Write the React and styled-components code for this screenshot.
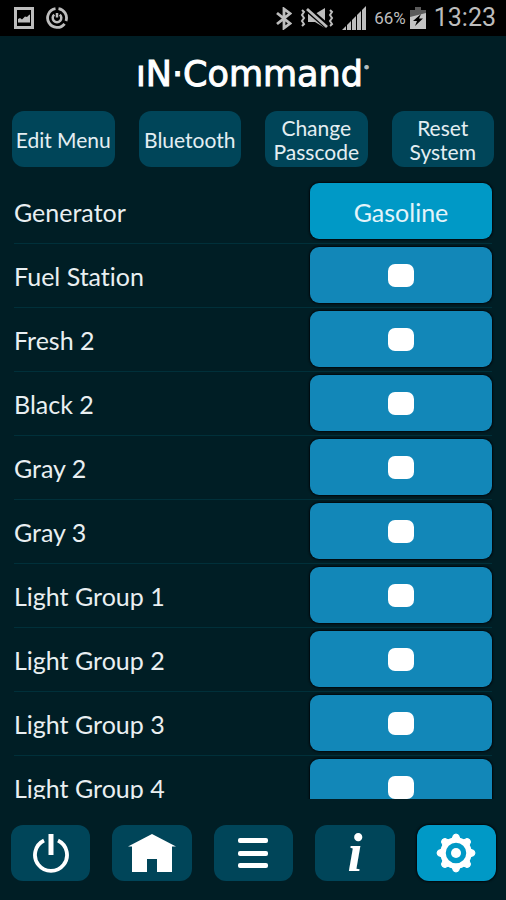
import { useState } from "react";
import styled, { createGlobalStyle } from "styled-components";

const actions = ["Edit Menu", "Bluetooth", "Change Passcode", "Reset System"];

const options = [
  { id: "fuel-station", name: "Fuel Station" },
  { id: "fresh-2", name: "Fresh 2" },
  { id: "black-2", name: "Black 2" },
  { id: "gray-2", name: "Gray 2" },
  { id: "gray-3", name: "Gray 3" },
  { id: "light-group-1", name: "Light Group 1" },
  { id: "light-group-2", name: "Light Group 2" },
  { id: "light-group-3", name: "Light Group 3" },
  { id: "light-group-4", name: "Light Group 4" },
];

const GlobalStyle = createGlobalStyle`
  *,
  *::before,
  *::after {
    box-sizing: border-box;
  }
  body {
    margin: 0;
    background: #001e25;
    color: #e9eff1;
    font-family: Lato, "Open Sans", sans-serif;
    font-variant-ligatures: none;
  }
  button {
    font-family: inherit;
    border: none;
    padding: 0;
    cursor: pointer;
  }
`;

/* status bar icons */
const PictureIcon = () => (
  <svg width="20" height="22" viewBox="0 0 20 22" aria-hidden="true">
    <rect x="1.5" y="1.5" width="17" height="19" fill="none" stroke="#bdbdbd" strokeWidth="3" />
    <path d="M4 15.500V12l2-1 2 1.500 3-3 2 .5 2-2 1-.5v8z" fill="#bdbdbd" />
  </svg>
);

const TargetIcon = () => (
  <svg width="22" height="22" viewBox="0 0 22 22" fill="none" stroke="#bdbdbd" aria-hidden="true">
    <path d="M12.500 1.600A9.500 9.500 0 0 1 20 14" strokeWidth="2.800" />
    <path d="M18.600 16.800A9.500 9.500 0 1 1 9.500 1.600" strokeWidth="2.800" />
    <path d="M8.200 7.600a4.300 4.300 0 1 0 5.600 0" strokeWidth="2.500" />
    <path d="M11 6v4.500" strokeWidth="2.500" />
  </svg>
);

const BluetoothIcon = () => (
  <svg width="16" height="23" viewBox="0 0 16 23" fill="none" stroke="#bdbdbd" strokeWidth="2.800" aria-hidden="true">
    <path d="M1 6l13 10.500-6 4.500V2l6 4.500L1 17" />
  </svg>
);

const MutedIcon = () => (
  <svg width="34" height="22" viewBox="0 0 34 22" aria-hidden="true">
    <g fill="none" stroke="#bdbdbd" strokeWidth="2">
      <path d="M2 3l2 2-2 3 2 3-2 3 2 3-2 2" />
      <path d="M30 3l2 2-2 3 2 3-2 3 2 3-2 2" />
    </g>
    <path d="M8 7h7l10-6v20l-10-6H8z" fill="#bdbdbd" />
    <path d="M6 1l22 19" stroke="#000" strokeWidth="6" />
    <path d="M7 2l20 18" stroke="#bdbdbd" strokeWidth="2.800" />
  </svg>
);

const SignalIcon = () => (
  <svg width="24" height="24" viewBox="0 0 24 24" fill="#bdbdbd" aria-hidden="true">
    <path d="M0 24l4-4v4zM5 24v-5l4-4V24zM10 24V14l4-4V24zM15 24V9L19 5v19zM20 24V4L24 0v24z" />
  </svg>
);

const BatteryIcon = () => (
  <svg width="16" height="22" viewBox="0 0 16 22" aria-hidden="true">
    <path d="M5 0h6v3h5v8H0V3h5z" fill="#5b5b5b" />
    <path d="M0 10l16-4v16H0z" fill="#c4c4c4" />
    <path d="M11 7L3 14h4L5 19l8-7.500H9z" fill="#000" />
  </svg>
);

/* bottom bar icons */
const PowerIcon = () => (
  <svg width="36" height="40" viewBox="0 0 36 40" fill="none" stroke="#fff" aria-hidden="true">
    <path d="M11 7.500A16 16 0 1 0 25 7.500" strokeWidth="3.800" />
    <path d="M18 1v21" strokeWidth="5" />
  </svg>
);

const HomeIcon = () => (
  <svg width="48" height="40" viewBox="0 0 48 40" fill="#fff" aria-hidden="true">
    <path d="M24 1L48 13.500H44V39H29V26H19V39H4V13.500H0z" />
  </svg>
);

const MenuIcon = () => (
  <svg width="30" height="32" viewBox="0 0 30 32" fill="#fff" aria-hidden="true">
    <rect y="1" width="30" height="5" rx="2" />
    <rect y="14" width="30" height="5" rx="2" />
    <rect y="26" width="30" height="5" rx="2" />
  </svg>
);

const GearIcon = () => (
  <svg width="40" height="40" viewBox="0 0 40 40" fill="none" stroke="#fff" aria-hidden="true">
    <circle cx="20" cy="20" r="13" strokeWidth="5.500" />
    <circle cx="20" cy="20" r="5" fill="#fff" stroke="none" />
    {[0, 45, 90, 135, 180, 225, 270, 315].map((angle) => (
      <path
        key={angle}
        d="M16 6l1.500-4q2.500-2 5 0l1.500 4z"
        fill="#fff"
        strokeWidth="1"
        strokeLinejoin="round"
        transform={`rotate(${angle} 20 20)`}
      />
    ))}
  </svg>
);

const tabs = [
  { name: "Power", icon: <PowerIcon /> },
  { name: "Home", icon: <HomeIcon /> },
  { name: "Menu", icon: <MenuIcon /> },
  { name: "Info", icon: null },
  { name: "Settings", icon: <GearIcon /> },
];

const App = () => {
  const [checked, setChecked] = useState({});
  const [tab, setTab] = useState("Settings");

  const handleChange = (e) => {
    setChecked({ ...checked, [e.target.name]: e.target.checked });
  };

  return (
    <>
      <GlobalStyle />
      <Screen>
        <StatusBar>
          <StatusGroup $gap={12}>
            <PictureIcon />
            <TargetIcon />
          </StatusGroup>
          <StatusGroup $gap={8}>
            <BluetoothIcon />
            <MutedIcon />
            <SignalIcon />
            <Battery>
              66%
              <BatteryIcon />
            </Battery>
            <Clock>13:23</Clock>
          </StatusGroup>
        </StatusBar>
        <Header>
          <Logo>
            ıN·Command<sup>•</sup>
          </Logo>
        </Header>
        <Actions>
          {actions.map((name) => (
            <ActionButton type="button" key={name}>
              {name}
            </ActionButton>
          ))}
        </Actions>
        <List>
          <Row>
            <RowLabel htmlFor="generator">Generator</RowLabel>
            <ValueButton type="button" id="generator">
              Gasoline
            </ValueButton>
          </Row>
          {options.map(({ id, name }) => (
            <Row key={id}>
              <RowLabel htmlFor={id}>{name}</RowLabel>
              <CheckTile htmlFor={id}>
                <Check
                  type="checkbox"
                  id={id}
                  name={id}
                  aria-label={name}
                  checked={Boolean(checked[id])}
                  onChange={handleChange}
                />
              </CheckTile>
            </Row>
          ))}
        </List>
        <TabBar>
          {tabs.map(({ name, icon }) => (
            <Tab
              type="button"
              key={name}
              aria-label={name}
              $active={tab === name}
              onClick={() => setTab(name)}
            >
              {icon || <InfoMark>i</InfoMark>}
            </Tab>
          ))}
        </TabBar>
      </Screen>
    </>
  );
};

const Screen = styled.div`
  display: flex;
  flex-direction: column;
  height: 100vh;
`;

const StatusBar = styled.div`
  display: flex;
  justify-content: space-between;
  align-items: center;
  flex: none;
  height: 36px;
  padding: 0 10px 0 14px;
  background: #000;
  color: #bdbdbd;
  font-family: Roboto, sans-serif;
`;

const StatusGroup = styled.div`
  display: flex;
  align-items: center;
  gap: ${({ $gap }) => $gap}px;
`;

const Battery = styled.span`
  display: flex;
  align-items: center;
  gap: 4px;
  font-size: 17px;
`;

const Clock = styled.span`
  font-size: 25px;
  line-height: 36px;
`;

const Header = styled.header`
  display: flex;
  justify-content: center;
  align-items: center;
  flex: none;
  height: 75px;
`;

const Logo = styled.h1`
  margin: 0;
  color: #fff;
  font-family: "DejaVu Sans", sans-serif;
  font-size: 35px;
  font-weight: 400;
  line-height: 40px;
  -webkit-text-stroke: 1px #fff;
  sup {
    color: #b4bfc3;
    font-size: 12px;
    line-height: 12px;
    vertical-align: 14px;
    -webkit-text-stroke: 1px #b4bfc3;
  }
`;

const Actions = styled.div`
  display: grid;
  grid-template-columns: repeat(4, 1fr);
  gap: 24px;
  flex: none;
  padding: 0 12px;
`;

const ActionButton = styled.button`
  height: 56px;
  padding-top: 2px;
  border-radius: 12px;
  background: #004559;
  color: #e4eef2;
  font-size: 21px;
  line-height: 24px;
`;

const List = styled.main`
  flex: 1;
  min-height: 0;
  margin-top: 13px;
  padding: 0 14px;
  overflow-y: auto;
  scrollbar-width: none;
`;

const Row = styled.div`
  display: flex;
  align-items: center;
  justify-content: space-between;
  padding: 3px 0 4px;
  border-bottom: 1px solid #00303a;
`;

const RowLabel = styled.label`
  padding-top: 2px;
  font-size: 25px;
  line-height: 32px;
`;

const ValueButton = styled.button`
  width: 182px;
  height: 56px;
  padding-top: 2px;
  border-radius: 9px;
  background: #0099c6;
  color: #e4f4fa;
  font-size: 25px;
  line-height: 32px;
  box-shadow: 0 0 2px 1px #00080c;
`;

const CheckTile = styled.label`
  display: flex;
  align-items: center;
  justify-content: center;
  width: 182px;
  height: 56px;
  border-radius: 9px;
  background: #1287b8;
  box-shadow: 0 0 2px 1px #00080c;
  cursor: pointer;
`;

const Check = styled.input`
  appearance: none;
  width: 26px;
  height: 23px;
  margin: 0;
  border-radius: 7px;
  background: #fff;
  &:checked {
    background: #00303a;
  }
`;

const TabBar = styled.nav`
  display: grid;
  grid-template-columns: repeat(5, 1fr);
  gap: 22px;
  flex: none;
  padding: 26px 10px 19px 11px;
`;

const Tab = styled.button`
  display: flex;
  align-items: center;
  justify-content: center;
  height: 56px;
  border-radius: 12px;
  background: ${({ $active }) => ($active ? "#0099c6" : "#004559")};
  box-shadow: ${({ $active }) => ($active ? "0 0 2px 1px #00080c" : "none")};
`;

const InfoMark = styled.span`
  color: #fff;
  font-family: "Liberation Serif", serif;
  font-size: 54px;
  font-style: italic;
  font-weight: 700;
  line-height: 56px;
`;

export default App;
